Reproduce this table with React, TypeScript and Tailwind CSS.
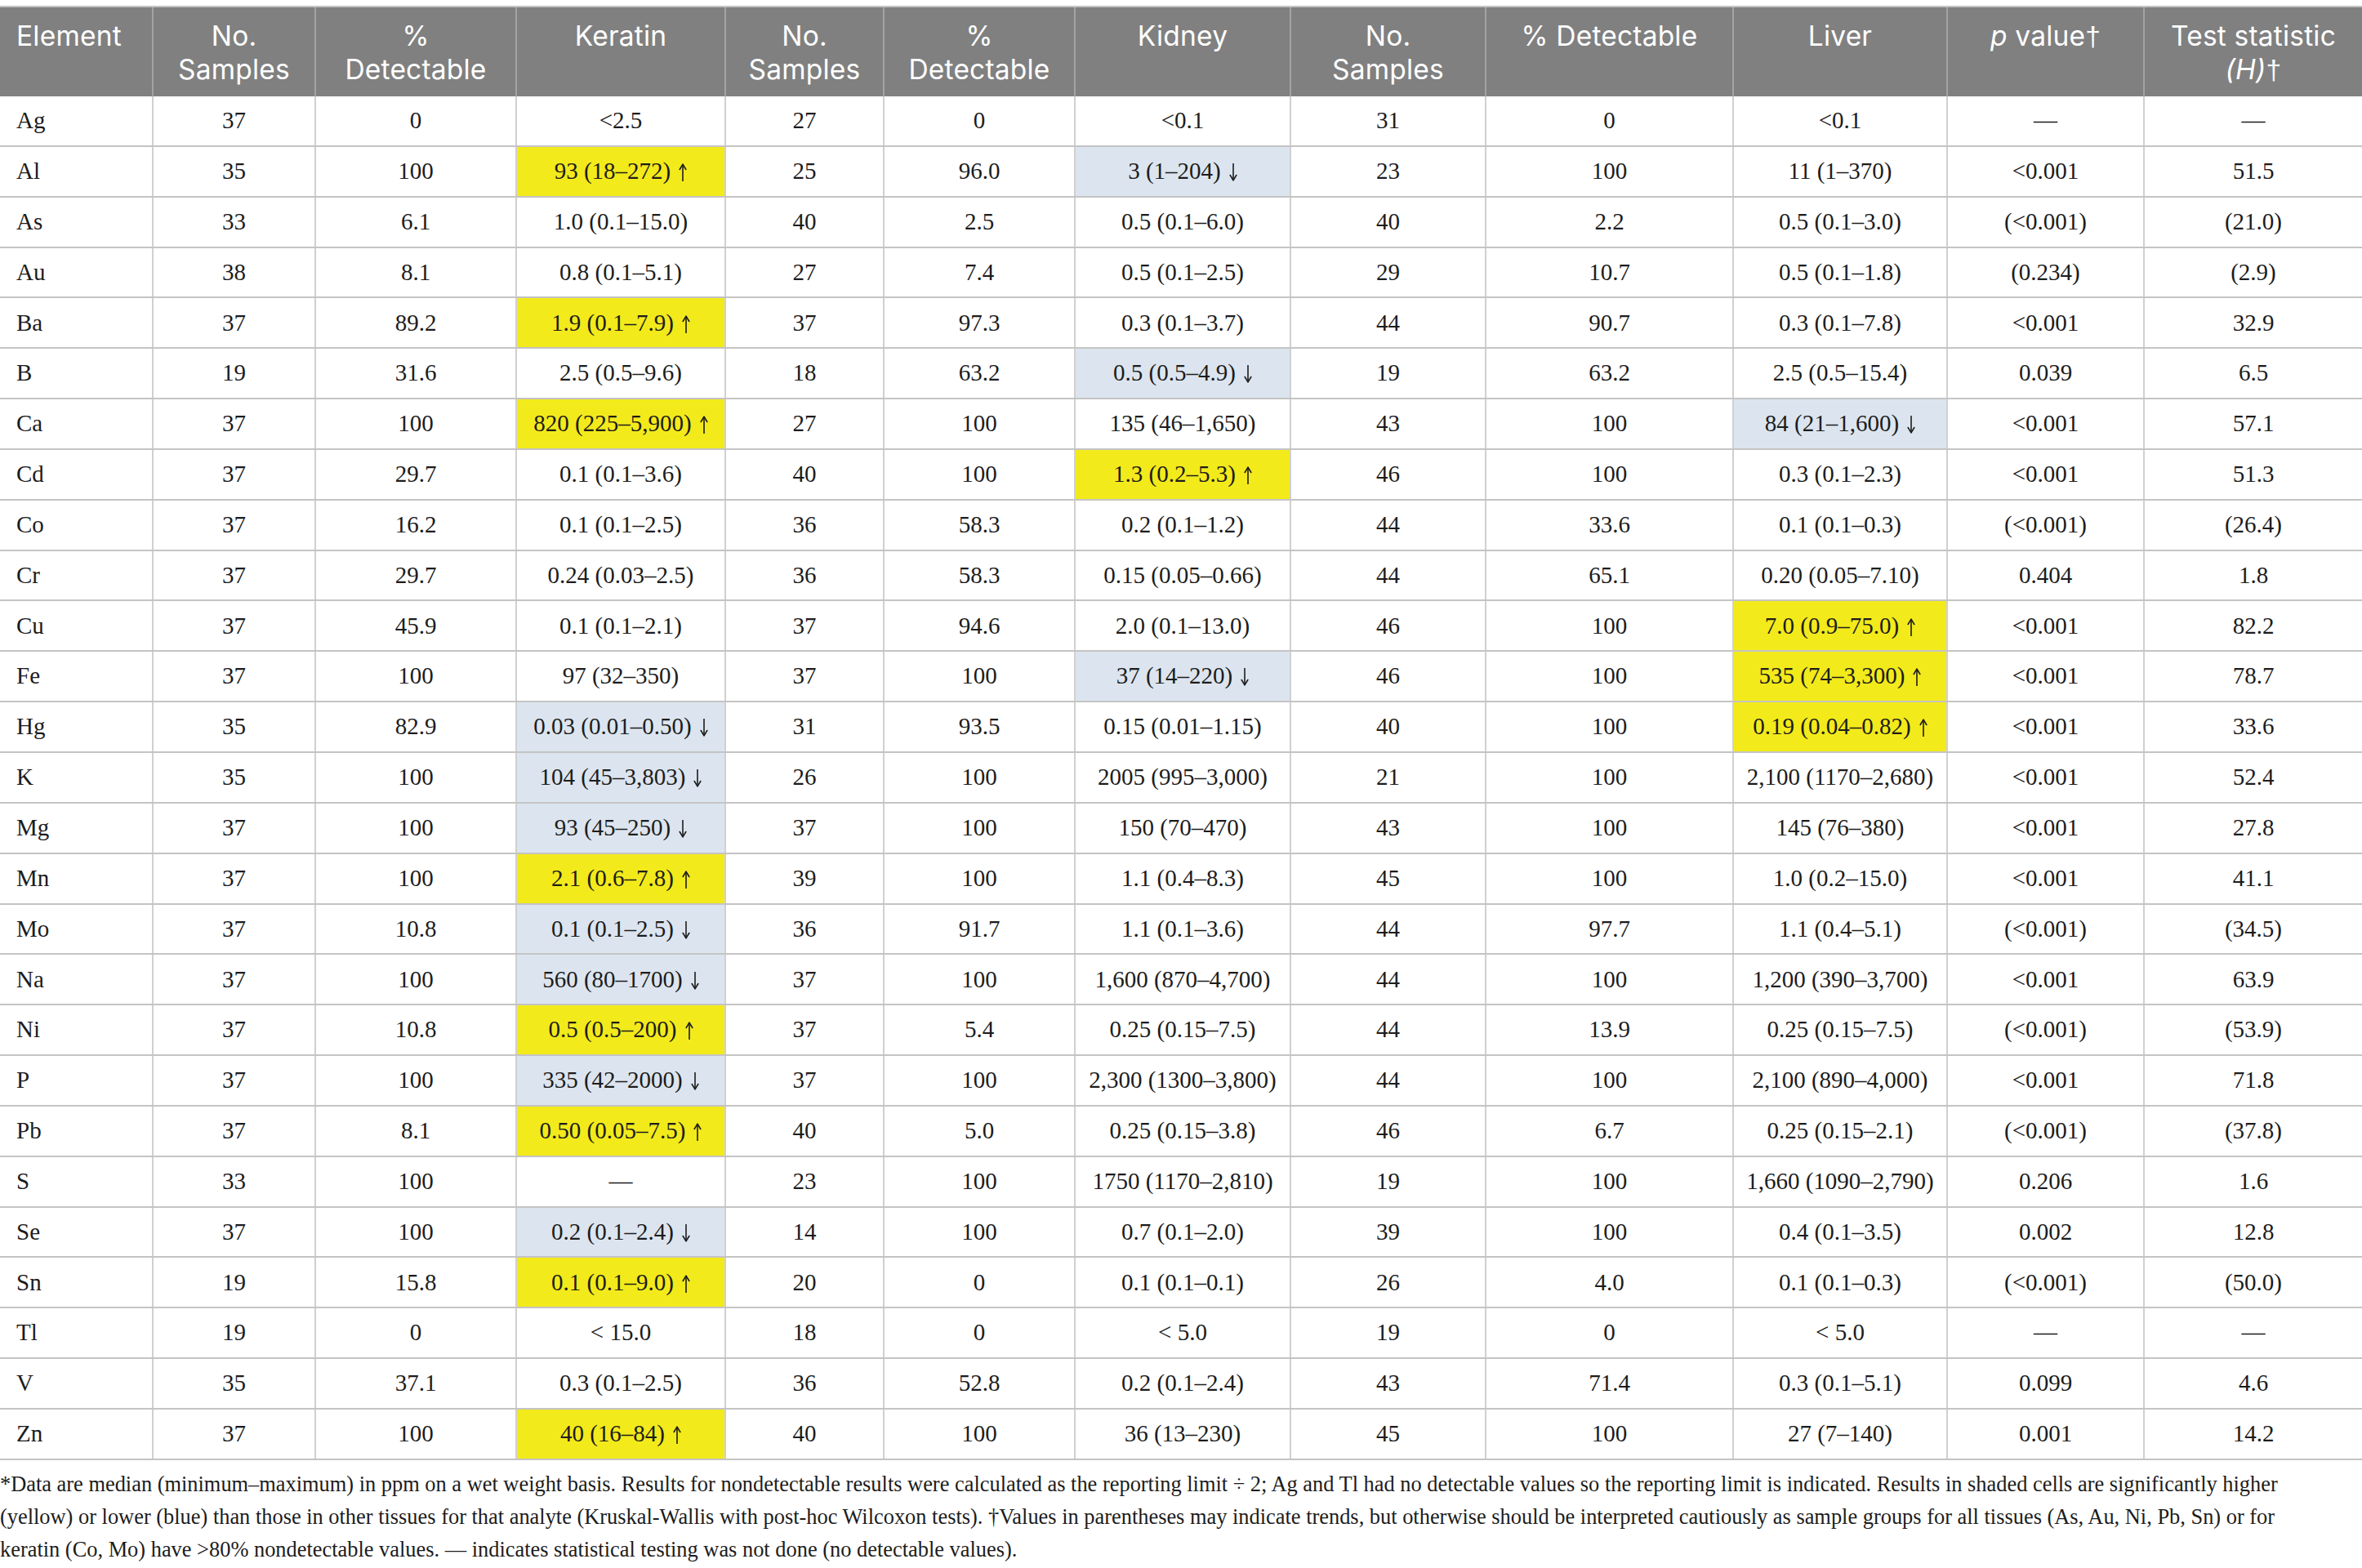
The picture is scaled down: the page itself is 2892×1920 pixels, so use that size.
import type { ReactNode } from "react";

// widths measured off the reference, 2892px total
const GRID =
  "grid grid-cols-[188px_199px_246px_256px_194px_234px_264px_239px_303px_262px_241px_266px]";

type Shade = "" | "Y" | "B";

// "Y:" = significantly higher (yellow), "B:" = lower (blue)
const ROWS: string[][] = [
  ["Ag", "37", "0", "<2.5", "27", "0", "<0.1", "31", "0", "<0.1", "—", "—"],
  ["Al", "35", "100", "Y:93 (18–272) ↑", "25", "96.0", "B:3 (1–204) ↓", "23", "100", "11 (1–370)", "<0.001", "51.5"],
  ["As", "33", "6.1", "1.0 (0.1–15.0)", "40", "2.5", "0.5 (0.1–6.0)", "40", "2.2", "0.5 (0.1–3.0)", "(<0.001)", "(21.0)"],
  ["Au", "38", "8.1", "0.8 (0.1–5.1)", "27", "7.4", "0.5 (0.1–2.5)", "29", "10.7", "0.5 (0.1–1.8)", "(0.234)", "(2.9)"],
  ["Ba", "37", "89.2", "Y:1.9 (0.1–7.9) ↑", "37", "97.3", "0.3 (0.1–3.7)", "44", "90.7", "0.3 (0.1–7.8)", "<0.001", "32.9"],
  ["B", "19", "31.6", "2.5 (0.5–9.6)", "18", "63.2", "B:0.5 (0.5–4.9) ↓", "19", "63.2", "2.5 (0.5–15.4)", "0.039", "6.5"],
  ["Ca", "37", "100", "Y:820 (225–5,900) ↑", "27", "100", "135 (46–1,650)", "43", "100", "B:84 (21–1,600) ↓", "<0.001", "57.1"],
  ["Cd", "37", "29.7", "0.1 (0.1–3.6)", "40", "100", "Y:1.3 (0.2–5.3) ↑", "46", "100", "0.3 (0.1–2.3)", "<0.001", "51.3"],
  ["Co", "37", "16.2", "0.1 (0.1–2.5)", "36", "58.3", "0.2 (0.1–1.2)", "44", "33.6", "0.1 (0.1–0.3)", "(<0.001)", "(26.4)"],
  ["Cr", "37", "29.7", "0.24 (0.03–2.5)", "36", "58.3", "0.15 (0.05–0.66)", "44", "65.1", "0.20 (0.05–7.10)", "0.404", "1.8"],
  ["Cu", "37", "45.9", "0.1 (0.1–2.1)", "37", "94.6", "2.0 (0.1–13.0)", "46", "100", "Y:7.0 (0.9–75.0) ↑", "<0.001", "82.2"],
  ["Fe", "37", "100", "97 (32–350)", "37", "100", "B:37 (14–220) ↓", "46", "100", "Y:535 (74–3,300) ↑", "<0.001", "78.7"],
  ["Hg", "35", "82.9", "B:0.03 (0.01–0.50) ↓", "31", "93.5", "0.15 (0.01–1.15)", "40", "100", "Y:0.19 (0.04–0.82) ↑", "<0.001", "33.6"],
  ["K", "35", "100", "B:104 (45–3,803) ↓", "26", "100", "2005 (995–3,000)", "21", "100", "2,100 (1170–2,680)", "<0.001", "52.4"],
  ["Mg", "37", "100", "B:93 (45–250) ↓", "37", "100", "150 (70–470)", "43", "100", "145 (76–380)", "<0.001", "27.8"],
  ["Mn", "37", "100", "Y:2.1 (0.6–7.8) ↑", "39", "100", "1.1 (0.4–8.3)", "45", "100", "1.0 (0.2–15.0)", "<0.001", "41.1"],
  ["Mo", "37", "10.8", "B:0.1 (0.1–2.5) ↓", "36", "91.7", "1.1 (0.1–3.6)", "44", "97.7", "1.1 (0.4–5.1)", "(<0.001)", "(34.5)"],
  ["Na", "37", "100", "B:560 (80–1700) ↓", "37", "100", "1,600 (870–4,700)", "44", "100", "1,200 (390–3,700)", "<0.001", "63.9"],
  ["Ni", "37", "10.8", "Y:0.5 (0.5–200) ↑", "37", "5.4", "0.25 (0.15–7.5)", "44", "13.9", "0.25 (0.15–7.5)", "(<0.001)", "(53.9)"],
  ["P", "37", "100", "B:335 (42–2000) ↓", "37", "100", "2,300 (1300–3,800)", "44", "100", "2,100 (890–4,000)", "<0.001", "71.8"],
  ["Pb", "37", "8.1", "Y:0.50 (0.05–7.5) ↑", "40", "5.0", "0.25 (0.15–3.8)", "46", "6.7", "0.25 (0.15–2.1)", "(<0.001)", "(37.8)"],
  ["S", "33", "100", "—", "23", "100", "1750 (1170–2,810)", "19", "100", "1,660 (1090–2,790)", "0.206", "1.6"],
  ["Se", "37", "100", "B:0.2 (0.1–2.4) ↓", "14", "100", "0.7 (0.1–2.0)", "39", "100", "0.4 (0.1–3.5)", "0.002", "12.8"],
  ["Sn", "19", "15.8", "Y:0.1 (0.1–9.0) ↑", "20", "0", "0.1 (0.1–0.1)", "26", "4.0", "0.1 (0.1–0.3)", "(<0.001)", "(50.0)"],
  ["Tl", "19", "0", "< 15.0", "18", "0", "< 5.0", "19", "0", "< 5.0", "—", "—"],
  ["V", "35", "37.1", "0.3 (0.1–2.5)", "36", "52.8", "0.2 (0.1–2.4)", "43", "71.4", "0.3 (0.1–5.1)", "0.099", "4.6"],
  ["Zn", "37", "100", "Y:40 (16–84) ↑", "40", "100", "36 (13–230)", "45", "100", "27 (7–140)", "0.001", "14.2"],
];

// Inter's dagger is tiny, borrow a full-height one
const Dagger = () => <span className="font-['Liberation_Sans',sans-serif] font-light">†</span>;

const HEADERS: ReactNode[] = [
  "Element",
  <>No.<br />Samples</>,
  <>%<br />Detectable</>,
  "Keratin",
  <>No.<br />Samples</>,
  <>%<br />Detectable</>,
  "Kidney",
  <>No.<br />Samples</>,
  "% Detectable",
  "Liver",
  <><i>p</i> value<Dagger /></>,
  <>Test statistic<br /><i>(H)</i><Dagger /></>,
];

function parse(raw: string): [Shade, string] {
  if (raw.startsWith("Y:")) return ["Y", raw.slice(2)];
  if (raw.startsWith("B:")) return ["B", raw.slice(2)];
  return ["", raw];
}

// thin, tall arrow like the one in the journal font
function Arrow({ up }: { up: boolean }) {
  return (
    <svg
      width="10"
      height="22"
      viewBox="0 0 10 22"
      className="ml-[10px] inline-block align-[-3px]"
      aria-label={up ? "↑" : "↓"}
    >
      {up ? (
        <g fill="none" stroke="currentColor" strokeWidth="1.6" strokeLinecap="round" strokeLinejoin="round">
          <path d="M5 21.5V1.5" />
          <path d="M1.2 7.5L5 1.2L8.8 7.5" />
        </g>
      ) : (
        <g fill="none" stroke="currentColor" strokeWidth="1.6" strokeLinecap="round" strokeLinejoin="round">
          <path d="M5 0.5V20.5" />
          <path d="M1.2 14.5L5 20.8L8.8 14.5" />
        </g>
      )}
    </svg>
  );
}

function CellText({ text }: { text: string }) {
  if (text.endsWith(" ↑") || text.endsWith(" ↓")) {
    return (
      <span>
        {text.slice(0, -2)}
        <Arrow up={text.endsWith("↑")} />
      </span>
    );
  }
  return <span>{text}</span>;
}

function HeaderRow() {
  return (
    <div className={`${GRID} h-[111px] border-t-2 border-[#c3c3c3] bg-[#808080] font-['Inter',sans-serif] text-[33.5px] leading-[41px] tracking-[0.2px] text-white`}>
      {HEADERS.map((h, i) => (
        <div
          key={i}
          className={
            i === 0
              ? "border-r-2 border-[#a3a3a3] pl-[20px] pt-[15px] text-left"
              : i === HEADERS.length - 1
                ? "whitespace-nowrap pt-[15px] text-center"
                : "whitespace-nowrap border-r-2 border-[#a3a3a3] pt-[15px] text-center"
          }
        >
          {h}
        </div>
      ))}
    </div>
  );
}

function DataRow({ cells }: { cells: string[] }) {
  return (
    <div className={`${GRID} h-[61.85px] border-b-2 border-[#c4c4c4]`}>
      {cells.map((raw, i) => {
        const [shade, text] = parse(raw);
        const bg = shade === "Y" ? "bg-[#f3ea1b]" : shade === "B" ? "bg-[#dce5ef]" : "";
        const edge = i === cells.length - 1 ? "" : "border-r-2 border-[#d0d0d0]";
        const align = i === 0 ? "justify-start pl-[20px]" : "justify-center";
        return (
          <div key={i} className={`flex items-center whitespace-nowrap ${align} ${edge} ${bg}`}>
            <CellText text={text} />
          </div>
        );
      })}
    </div>
  );
}

export default function App() {
  return (
    <div className="min-h-screen w-[2892px] bg-white pt-[7px] font-['Liberation_Serif',serif] text-[#1c1c1c]">
      <HeaderRow />
      <div className="text-[29px]">
        {ROWS.map((r) => (
          <DataRow key={r[0]} cells={r} />
        ))}
      </div>
      <p className="mt-[9px] whitespace-nowrap text-[26.4px] leading-[40px]">
        *Data are median (minimum–maximum) in ppm on a wet weight basis. Results for nondetectable results were calculated as the reporting limit ÷ 2; Ag and Tl had no detectable values so the reporting limit is indicated. Results in shaded cells are significantly higher
        <br />
        (yellow) or lower (blue) than those in other tissues for that analyte (Kruskal-Wallis with post-hoc Wilcoxon tests). †Values in parentheses may indicate trends, but otherwise should be interpreted cautiously as sample groups for all tissues (As, Au, Ni, Pb, Sn) or for
        <br />
        keratin (Co, Mo) have &gt;80% nondetectable values. — indicates statistical testing was not done (no detectable values).
      </p>
    </div>
  );
}
